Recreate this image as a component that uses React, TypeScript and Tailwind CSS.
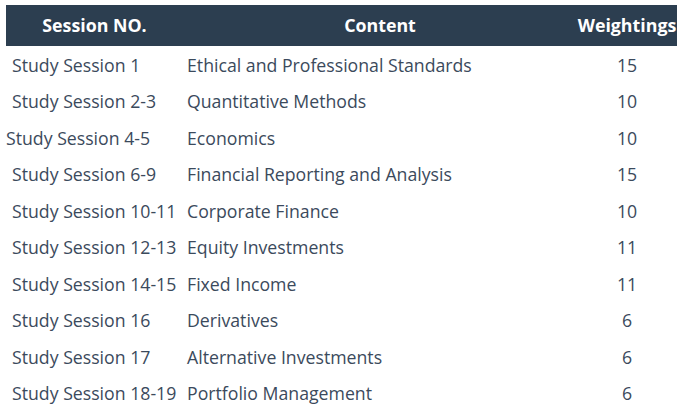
const rows = [
  { session: 'Study Session 1', content: 'Ethical and Professional Standards', weight: 15 },
  { session: 'Study Session 2-3', content: 'Quantitative Methods', weight: 10 },
  { session: 'Study Session 4-5', content: 'Economics', weight: 10, shift: true },
  { session: 'Study Session 6-9', content: 'Financial Reporting and Analysis', weight: 15 },
  { session: 'Study Session 10-11', content: 'Corporate Finance', weight: 10 },
  { session: 'Study Session 12-13', content: 'Equity Investments', weight: 11 },
  { session: 'Study Session 14-15', content: 'Fixed Income', weight: 11 },
  { session: 'Study Session 16', content: 'Derivatives', weight: 6 },
  { session: 'Study Session 17', content: 'Alternative Investments', weight: 6 },
  { session: 'Study Session 18-19', content: 'Portfolio Management', weight: 6 },
]

export default function App() {
  return (
    <div
      className="w-[687px] h-[413px] bg-white pt-[5px] pl-[6px] pr-[10px] overflow-hidden"
      style={{ fontFamily: '"Open Sans", "Noto Sans", sans-serif' }}
    >
      <div className="grid grid-cols-[177px_394px_100px] h-[41px] items-center bg-[#2c3e50] text-white font-bold text-[17.8px]">
        <div className="text-center">Session NO.</div>
        <div className="text-center">Content</div>
        <div className="text-center whitespace-nowrap">Weightings</div>
      </div>
      <div className="mt-[1px]">
        {rows.map((r) => (
          <div
            key={r.session}
            className="grid grid-cols-[177px_394px_100px] h-[36.5px] items-center text-[#3b4a5c] text-[17.7px] whitespace-nowrap"
          >
            <div className={r.shift ? 'pl-0' : 'pl-[6px]'}>{r.session}</div>
            <div className="pl-[4px]">{r.content}</div>
            <div className="text-center">{r.weight}</div>
          </div>
        ))}
      </div>
    </div>
  )
}
